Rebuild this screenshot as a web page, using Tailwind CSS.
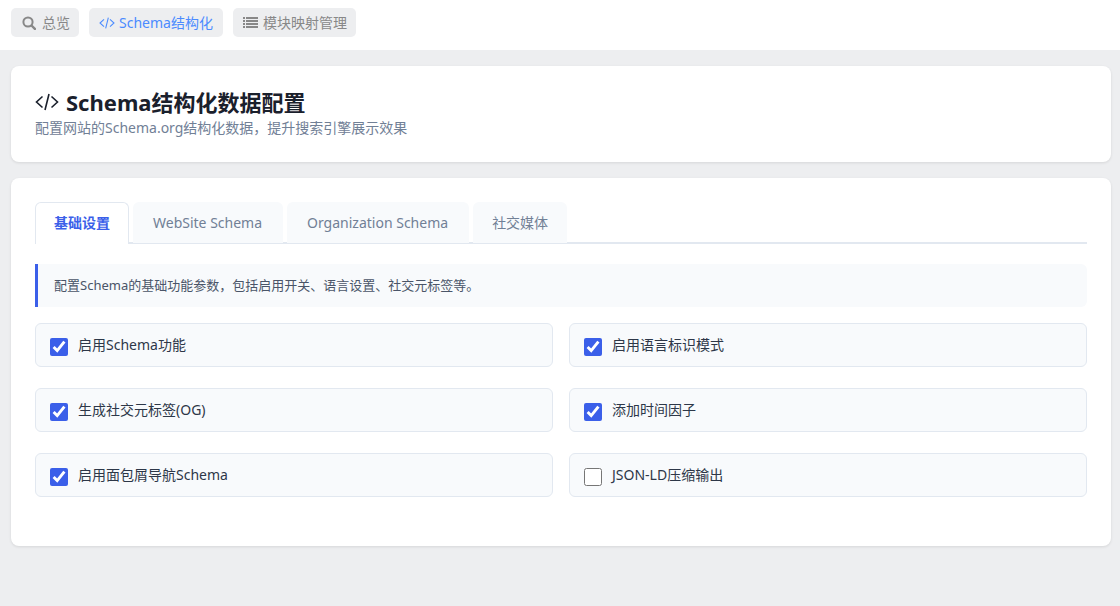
<!DOCTYPE html>
<html lang="zh-CN">
<head>
<meta charset="utf-8">
<meta name="viewport" content="width=device-width, initial-scale=1">
<title>Schema结构化数据配置</title>
<script src="https://cdn.jsdelivr.net/npm/@tailwindcss/browser@4"></script>
</head>
<body class="min-h-screen bg-[#edeef0] font-['Noto_Sans','Noto_Sans_CJK_SC',sans-serif] text-sm leading-5 text-[#2d3748]">
<svg class="hidden">
  <symbol id="code" viewBox="0 0 24 18"><path d="M7.500 3.500 1.500 9l6 5.500M16.500 3.500l6 5.500-6 5.500M14 1l-4 16" fill="none" stroke="currentColor" stroke-width="1.600"/></symbol>
</svg>

<nav class="flex h-[50px] gap-[10px] bg-white pt-2 pl-[11px] text-[#888]">
  <a href="#" class="flex h-[29px] items-center gap-[6px] rounded-[5px] bg-[#edeef0] pr-[9px] pl-[11px]">
    <svg class="size-[14px]" viewBox="0 0 14 14" fill="none" stroke="currentColor"><circle cx="6" cy="6" r="4.600" stroke-width="2"/><path d="m9.500 9.500 3.400 3.400" stroke-width="2.400" stroke-linecap="round"/></svg>
    <span>总览</span>
  </a>
  <a href="#" class="flex h-[29px] items-center gap-1 rounded-[5px] bg-[#edeef0] px-[10px] text-[#4b8bff]" aria-current="page">
    <svg class="h-3 w-4"><use href="#code"/></svg>
    <span>Schema结构化</span>
  </a>
  <a href="#" class="flex h-[29px] items-center gap-[5px] rounded-[5px] bg-[#edeef0] pr-[9px] pl-[10px]">
    <svg class="h-[14px] w-[15px]" viewBox="0 0 15 14" fill="currentColor" shape-rendering="crispEdges"><path d="M0 1h2v2H0zM3 1h12v2H3zM0 4h2v2H0zM3 4h12v2H3zM0 7h2v2H0zM3 7h12v2H3zM0 10h2v2H0zM3 10h12v2H3z"/></svg>
    <span>模块映射管理</span>
  </a>
</nav>

<main class="flex flex-col gap-4 pt-4 pr-[9px] pb-15 pl-[11px]">
  <header class="rounded-lg bg-white px-6 pt-[22px] pb-6 shadow-[0_1px_3px_rgba(0,0,0,0.1)]">
    <h1 class="mb-[2px] flex items-center gap-[7px] text-[22px] leading-7 font-bold text-[#1a202c]">
      <svg class="h-[18px] w-6"><use href="#code"/></svg>
      <span>Schema结构化数据配置</span>
    </h1>
    <p class="text-[#718096]">配置网站的Schema.org结构化数据，提升搜索引擎展示效果</p>
  </header>

  <section class="rounded-lg bg-white px-6 pt-6 pb-[49px] shadow-[0_1px_3px_rgba(0,0,0,0.1)]">
    <div role="tablist" class="mb-5 flex h-[42px] gap-1 border-b-2 border-[#e2e8f0] text-[#718096]">
      <button type="button" role="tab" aria-selected="true" class="h-[42px] rounded-t-md border border-b-0 border-[#e2e8f0] bg-white px-[18px] pb-px font-bold text-[#3b5fe9]">基础设置</button>
      <button type="button" role="tab" aria-selected="false" class="h-[41px] rounded-t-md bg-[#f8fafc] pr-[21px] pl-5">WebSite Schema</button>
      <button type="button" role="tab" aria-selected="false" class="h-[41px] rounded-t-md bg-[#f8fafc] pr-[21px] pl-5">Organization Schema</button>
      <button type="button" role="tab" aria-selected="false" class="h-[41px] rounded-t-md bg-[#f8fafc] px-[19px]">社交媒体</button>
    </div>

    <p class="mb-4 rounded-r-md border-l-3 border-[#3b5fe9] bg-[#f8fafc] px-4 py-3 text-[13px] leading-[19px] text-[#4a5568]">配置Schema的基础功能参数，包括启用开关、语言设置、社交元标签等。</p>

    <form class="grid grid-cols-2 gap-x-4 gap-y-[21px]">
      <label class="flex h-11 gap-[10px] rounded-md border border-[#e2e8f0] bg-[#f8fafc] px-[14px]"><input type="checkbox" checked class="mt-[14px] size-[18px] shrink-0 accent-[#3b5fe9]"><span class="mt-[11px]">启用Schema功能</span></label>
      <label class="flex h-11 gap-[10px] rounded-md border border-[#e2e8f0] bg-[#f8fafc] px-[14px]"><input type="checkbox" checked class="mt-[14px] size-[18px] shrink-0 accent-[#3b5fe9]"><span class="mt-[11px]">启用语言标识模式</span></label>
      <label class="flex h-11 gap-[10px] rounded-md border border-[#e2e8f0] bg-[#f8fafc] px-[14px]"><input type="checkbox" checked class="mt-[14px] size-[18px] shrink-0 accent-[#3b5fe9]"><span class="mt-[11px]">生成社交元标签(OG)</span></label>
      <label class="flex h-11 gap-[10px] rounded-md border border-[#e2e8f0] bg-[#f8fafc] px-[14px]"><input type="checkbox" checked class="mt-[14px] size-[18px] shrink-0 accent-[#3b5fe9]"><span class="mt-[11px]">添加时间因子</span></label>
      <label class="flex h-11 gap-[10px] rounded-md border border-[#e2e8f0] bg-[#f8fafc] px-[14px]"><input type="checkbox" checked class="mt-[14px] size-[18px] shrink-0 accent-[#3b5fe9]"><span class="mt-[11px]">启用面包屑导航Schema</span></label>
      <label class="flex h-11 gap-[10px] rounded-md border border-[#e2e8f0] bg-[#f8fafc] px-[14px]"><input type="checkbox" class="mt-[14px] size-[18px] shrink-0 accent-[#3b5fe9]"><span class="mt-[11px]">JSON-LD压缩输出</span></label>
    </form>
  </section>
</main>
</body>
</html>
